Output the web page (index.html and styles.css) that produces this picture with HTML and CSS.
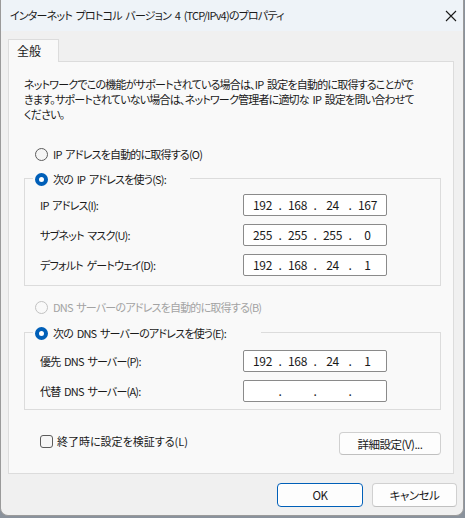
FILE: index.html
```html
<!DOCTYPE html>
<html lang="ja">
<head>
<meta charset="utf-8">
<title>プロパティ</title>
<link rel="stylesheet" href="styles.css">
</head>
<body>
<div class="window">
  <div class="titlebar">
    <span class="title">インターネット プロトコル バージョン 4 (TCP/IPv4)のプロパティ</span>
    <svg class="close" width="12" height="12" viewBox="0 0 12 12"><path d="M1 1 L11 11 M11 1 L1 11" stroke="#1a1a1a" stroke-width="1.1" fill="none"/></svg>
  </div>
  <div class="content">
    <div class="tabs"><div class="tab">全般</div></div>
    <div class="panel">
      <p class="desc">ネットワークでこの機能がサポートされている場合は、IP 設定を自動的に取得することがで<br>きます。サポートされていない場合は、ネットワーク管理者に適切な IP 設定を問い合わせて<br>ください。</p>

      <div class="radio-row first"><span class="radio"></span><span>IP アドレスを自動的に取得する(O)</span></div>

      <div class="group g1">
        <div class="legend"><span class="radio checked"></span><span>次の IP アドレスを使う(S):</span></div>
        <div class="rows">
          <span class="label">IP アドレス(I):</span>
          <div class="ipfield"><span class="seg">192</span><span class="dot">.</span><span class="seg">168</span><span class="dot">.</span><span class="seg">24</span><span class="dot">.</span><span class="seg">167</span></div>
          <span class="label">サブネット マスク(U):</span>
          <div class="ipfield"><span class="seg">255</span><span class="dot">.</span><span class="seg">255</span><span class="dot">.</span><span class="seg">255</span><span class="dot">.</span><span class="seg">0</span></div>
          <span class="label">デフォルト ゲートウェイ(D):</span>
          <div class="ipfield"><span class="seg">192</span><span class="dot">.</span><span class="seg">168</span><span class="dot">.</span><span class="seg">24</span><span class="dot">.</span><span class="seg">1</span></div>
        </div>
      </div>

      <div class="radio-row dns disabled"><span class="radio"></span><span>DNS サーバーのアドレスを自動的に取得する(B)</span></div>

      <div class="group g2">
        <div class="legend"><span class="radio checked"></span><span>次の DNS サーバーのアドレスを使う(E):</span></div>
        <div class="rows">
          <span class="label">優先 DNS サーバー(P):</span>
          <div class="ipfield"><span class="seg">192</span><span class="dot">.</span><span class="seg">168</span><span class="dot">.</span><span class="seg">24</span><span class="dot">.</span><span class="seg">1</span></div>
          <span class="label">代替 DNS サーバー(A):</span>
          <div class="ipfield"><span class="seg"></span><span class="dot">.</span><span class="seg"></span><span class="dot">.</span><span class="seg"></span><span class="dot">.</span><span class="seg"></span></div>
        </div>
      </div>

      <div class="bottom-row">
        <label class="check"><span class="box"></span><span class="check-text">終了時に設定を検証する(L)</span></label>
        <button class="btn adv">詳細設定(V)...</button>
      </div>
    </div>
    <div class="dialog-buttons">
      <button class="btn ok">OK</button>
      <button class="btn cancel">キャンセル</button>
    </div>
  </div>
</div>
</body>
</html>
```
FILE: styles.css
```css
html, body {
  margin: 0;
  padding: 0;
}
body {
  width: 465px;
  height: 518px;
  background: #8a929c;
  font-family: "Noto Sans CJK JP", "Noto Sans", sans-serif;
  font-size: 11px;
  letter-spacing: -0.8px;
  word-spacing: 2px;
  font-feature-settings: "palt";
  color: #1a1a1a;
  overflow: hidden;
}
.window {
  width: 462px;
  height: 515px;
  background: #f0f0f0;
  border: 1px solid #9a9a9a;
  border-top: none;
  border-radius: 0 0 8px 8px;
  display: flex;
  flex-direction: column;
  overflow: hidden;
}
.titlebar {
  height: 31px;
  flex: none;
  background: #eef3f8;
  display: flex;
  align-items: center;
  justify-content: space-between;
  padding: 0 6px 0 9px;
}
.title {
  line-height: 15px;
  white-space: nowrap;
}
.close {
  display: block;
}
.content {
  padding: 8px 8px 0 7px;
  display: flex;
  flex-direction: column;
}
.tabs {
  display: flex;
  height: 22px;
}
.tab {
  width: 51px;
  box-sizing: border-box;
  border: 1px solid #dcdcdc;
  border-bottom: none;
  background: #f9f9f9;
  padding: 3px 0 0 8px;
  line-height: 16px;
  letter-spacing: 0;
  font-size: 12px;
  position: relative;
  z-index: 1;
  margin-bottom: -1px;
  height: 23px;
}
.panel {
  width: 446px;
  height: 413px;
  box-sizing: border-box;
  border: 1px solid #dcdcdc;
  background: #f9f9f9;
  padding: 15px 12px 0 15px;
  display: flex;
  flex-direction: column;
}
.desc {
  margin: 0;
  line-height: 15px;
  white-space: nowrap;
}
.radio-row, .legend {
  display: flex;
  align-items: center;
  height: 20px;
  line-height: 20px;
  white-space: nowrap;
}
.radio-row {
  padding-left: 11px;
}
.radio-row.first {
  margin-top: 22px;
}
.radio-row.dns {
  margin-top: 11px;
}
.radio-row.disabled {
  color: #a3a3a3;
}
.radio {
  width: 13px;
  height: 13px;
  box-sizing: border-box;
  border-radius: 50%;
  border: 1px solid #5c5c5c;
  background: #f5f5f5;
  margin-right: 5px;
  flex: none;
}
.disabled .radio {
  border-color: #c2c2c2;
  background: #f9f9f9;
}
.radio.checked {
  border: 4px solid #005fb8;
  background: #ffffff;
}
.group {
  border: 1px solid #dcdcdc;
  margin-top: 14px;
}
.legend {
  margin: -10px 0 0 8px;
  background: #f9f9f9;
  padding: 0 0 0 2px;
  box-sizing: border-box;
}
.g1 .legend {
  width: 157px;
}
.g2 .legend {
  width: 228px;
}
.rows {
  display: grid;
  grid-template-columns: 1fr 144px;
  row-gap: 8px;
  align-items: center;
  padding: 0 53px 0 15px;
}
.g1 .rows {
  padding-top: 5px;
  padding-bottom: 9px;
}
.g2 {
  margin-top: 15px;
}
.g2 .rows {
  padding-top: 7px;
  padding-bottom: 7px;
}
.label {
  white-space: nowrap;
  line-height: 16px;
}
.ipfield {
  height: 22px;
  box-sizing: border-box;
  border: 1px solid #8a8a8a;
  border-radius: 2px;
  background: #ffffff;
  display: grid;
  grid-template-columns: 31px 4px 31px 4px 31px 4px 31px;
  padding-left: 3px;
  align-items: center;
  line-height: 20px;
  font-size: 12px;
  letter-spacing: -0.4px;
  font-feature-settings: normal;
}
.seg {
  text-align: center;
}
.dot {
  text-align: center;
  display: flex;
  justify-content: center;
}
.bottom-row {
  display: flex;
  justify-content: space-between;
  align-items: flex-start;
  margin-top: 22px;
  padding: 0 0 0 16px;
}
.check {
  display: flex;
  align-items: center;
  height: 16px;
  line-height: 16px;
  margin-top: 1px;
}
.check-text {
  letter-spacing: 0;
}
.box {
  width: 13px;
  height: 13px;
  box-sizing: border-box;
  border: 1px solid #5c5c5c;
  border-radius: 3px;
  background: #f6f6f6;
  margin-right: 4px;
}
.btn {
  font-family: inherit;
  font-size: 11.5px;
  letter-spacing: -0.5px;
  font-feature-settings: "palt";
  color: #1a1a1a;
  background: #fdfdfd;
  border: 1px solid #d0d0d0;
  border-bottom-color: #c0c0c0;
  border-radius: 4px;
  height: 24px;
  padding: 0;
  line-height: 20px;
}
.adv {
  width: 102px;
  height: 23px;
}
.dialog-buttons {
  display: flex;
  justify-content: flex-end;
  gap: 9px;
  margin-top: 9px;
  margin-right: -2px;
}
.ok {
  width: 86px;
  border: 1px solid #005fb8;
  box-shadow: inset 0 0 0 1px #ffffff;
}
.cancel {
  width: 85px;
}
```
